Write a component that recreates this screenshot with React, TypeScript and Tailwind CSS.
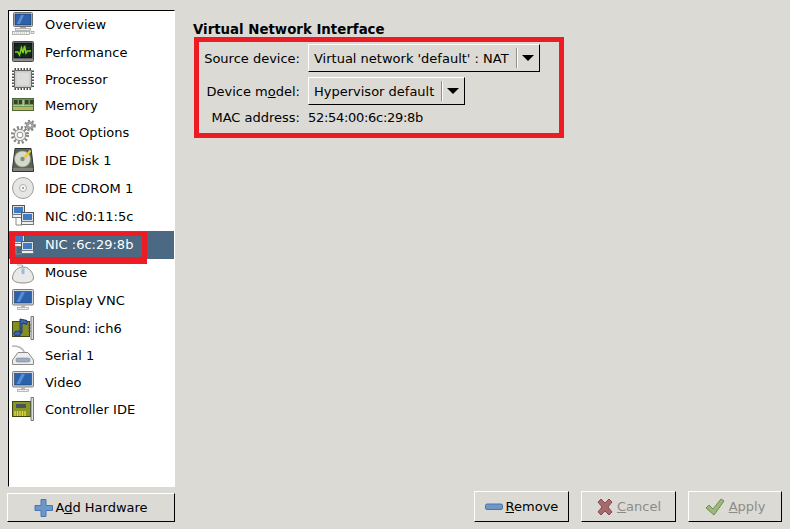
const FONT = "font-['DejaVu_Sans',sans-serif]";

function Monitor() {
  return (
    <svg width="24" height="24" viewBox="0 0 24 24">
      <rect x="1.500" y="1.500" width="21" height="15.500" rx="1" fill="#d5d9dc" stroke="#7d7f80" />
      <rect x="3.500" y="3.500" width="17" height="11.500" fill="#2b62ad" stroke="#23406b" strokeWidth="0.600" />
      <path d="M9 14l5-10h-3.500l-5 10z" fill="#5e8bce" />
      <rect x="10" y="17" width="4" height="2.500" fill="#b4b6b4" />
      <rect x="6.500" y="19.500" width="11" height="2" fill="#ecece9" stroke="#a3a3a0" strokeWidth="0.700" />
    </svg>
  );
}

function Overview() {
  return (
    <svg width="24" height="24" viewBox="0 0 24 24">
      <rect x="2.500" y="0.500" width="19" height="14" rx="1" fill="#d5d9dc" stroke="#6c6e70" />
      <rect x="4" y="2" width="16" height="11" fill="#2b62ad" stroke="#1f3454" strokeWidth="0.700" />
      <path d="M9 12l4-9h-3l-4 9z" fill="#5e8bce" />
      <rect x="9" y="15" width="6" height="1.500" fill="#aaa" />
      <rect x="4.500" y="16.500" width="15" height="2" fill="#ecece9" stroke="#999" strokeWidth="0.700" />
      <rect x="1.500" y="19.500" width="17" height="3" fill="#f2f2f0" stroke="#999" strokeWidth="0.700" />
      <path d="M3 21h14" stroke="#bbb" strokeDasharray="1 1" />
      <rect x="20" y="19.500" width="3" height="2" fill="#eee" stroke="#999" strokeWidth="0.700" />
    </svg>
  );
}

function Performance() {
  return (
    <svg width="24" height="24" viewBox="0 0 24 24">
      <rect x="1.500" y="1.500" width="21" height="20" rx="1" fill="#8a8c8d" stroke="#4a4a4a" />
      <rect x="3" y="3" width="18" height="15" fill="#13241a" stroke="#000" strokeWidth="0.600" />
      <path d="M4 8h16M4 13h16M9 4v13M15 4v13" stroke="#3d5a3a" strokeWidth="0.400" />
      <path d="M4 12h3l1.500 3 2-7 1.500 5 1.500-7 1.500 7 1.500-2h3.500" fill="none" stroke="#7ed321" strokeWidth="1.500" />
    </svg>
  );
}

function Processor() {
  const pins = [2, 5, 8, 11, 14, 17];
  return (
    <svg width="24" height="24" viewBox="0 0 24 24">
      {pins.map((p) => (
        <g key={p} fill="#4f4f4f">
          <rect x={p + 1.500} y="1" width="1.500" height="3" />
          <rect x={p + 1.500} y="20" width="1.500" height="3" />
          <rect x="1" y={p + 1.500} width="3" height="1.500" />
          <rect x="20" y={p + 1.500} width="3" height="1.500" />
        </g>
      ))}
      <rect x="3.500" y="3.500" width="17" height="17" rx="1" fill="#c9c9c7" stroke="#6b6b6b" />
      <rect x="5.500" y="5.500" width="13" height="13" fill="#dcdcda" />
    </svg>
  );
}

function Memory() {
  const chips = [3, 8, 14, 19];
  return (
    <svg width="24" height="24" viewBox="0 0 24 24">
      <rect x="1.500" y="5.500" width="21" height="12" fill="#6f9457" stroke="#4d6a3c" />
      {chips.map((x) => (
        <rect key={x} x={x} y="7" width="3.500" height="4" fill="#36402f" />
      ))}
      <path d="M2 12.500h20" stroke="#a7c48c" />
      <path d="M12 7v6" stroke="#d3e6bd" />
      <rect x="2" y="14" width="20" height="3" fill="#dcc95f" />
      <path d="M3 14v3M5 14v3M7 14v3M9 14v3M11 14v3M13 14v3M15 14v3M17 14v3M19 14v3M21 14v3" stroke="#6f7a30" strokeWidth="0.500" />
    </svg>
  );
}

function Gear({ cx, cy, r, fill }: { cx: number; cy: number; r: number; fill: string }) {
  return (
    <g>
      <circle cx={cx} cy={cy} r={r} fill="none" stroke="#858583" strokeWidth={r * 0.42} strokeDasharray="2 2" />
      <circle cx={cx} cy={cy} r={r * 0.76} fill={fill} stroke="#7a7a78" strokeWidth="0.800" />
      <circle cx={cx} cy={cy} r={r * 0.38} fill="#fff" stroke="#7a7a78" strokeWidth="0.800" />
    </g>
  );
}

function Boot() {
  return (
    <svg width="25" height="26" viewBox="0 0 25 26">
      <Gear cx={19} cy={6.500} r={4.800} fill="#b5b5b3" />
      <Gear cx={9} cy={16} r={7.500} fill="#efefed" />
    </svg>
  );
}

function Disk() {
  return (
    <svg width="24" height="26" viewBox="0 0 24 26">
      <path d="M4 1.500h16l2.500 20v3h-21v-3z" fill="#5a6652" stroke="#333" />
      <rect x="2" y="21" width="20" height="3" fill="#7f817c" />
      <circle cx="11.500" cy="12" r="8" fill="#d5dac8" stroke="#8d947f" strokeWidth="0.600" />
      <circle cx="11.500" cy="12" r="2.200" fill="#888" />
      <path d="M19.500 3.500l-6 7.500" stroke="#ecc82c" strokeWidth="2.200" />
    </svg>
  );
}

function Cdrom() {
  return (
    <svg width="24" height="24" viewBox="0 0 24 24">
      <circle cx="12" cy="12" r="10.500" fill="#e6e6e4" stroke="#9e9e9c" />
      <circle cx="12" cy="12" r="3.500" fill="#f7f7f6" stroke="#b0b0ae" />
      <circle cx="12" cy="12" r="1" fill="#888" />
    </svg>
  );
}

function Nic() {
  return (
    <svg width="24" height="24" viewBox="0 0 24 24">
      <path d="M5 14v7h6" fill="none" stroke="#8a8a8a" />
      <rect x="1.500" y="1.500" width="12" height="9" fill="#dde1e5" stroke="#555" />
      <rect x="3" y="3" width="9" height="6" fill="#3f7ac4" />
      <rect x="1.500" y="10.500" width="12" height="3" fill="#efefed" stroke="#777" />
      <rect x="10.500" y="8.500" width="12" height="9" fill="#dde1e5" stroke="#555" />
      <rect x="12" y="10" width="9" height="6" fill="#3f7ac4" />
      <rect x="10.500" y="17.500" width="12" height="3" fill="#efefed" stroke="#777" />
    </svg>
  );
}

function Mouse() {
  return (
    <svg width="24" height="24" viewBox="0 0 24 24">
      <path d="M11.500 7V4H6" fill="none" stroke="#a5a5a5" />
      <path d="M12 6c7 0 10.500 7 10.500 11 0 3-4 5-10.500 5S1.500 20 1.500 17C1.500 13 5 6 12 6z" fill="#e9e9e7" stroke="#8c8c8a" />
      <path d="M10.500 7.500h3v5l-1.500 1-1.500-1z" fill="#9dbbdd" />
    </svg>
  );
}

function Sound() {
  return (
    <svg width="24" height="26" viewBox="0 0 24 26">
      <rect x="1.500" y="6.500" width="17" height="15" fill="#838f22" stroke="#3d4510" />
      <path d="M20 1.500h2.500v23H20z" fill="#dedede" stroke="#777" />
      <path d="M17 10h3M17 13h3M17 16h3" stroke="#555" />
      <path d="M9 18V4l7 1.500v4L11 8v10z" fill="#3d64a8" stroke="#203a70" />
      <ellipse cx="6.500" cy="18.500" rx="3.500" ry="2.500" fill="#3d64a8" stroke="#203a70" />
    </svg>
  );
}

function Serial() {
  return (
    <svg width="24" height="24" viewBox="0 0 24 24">
      <path d="M14 10C11 4 7 3 1 3" fill="none" stroke="#b5b5b5" strokeWidth="1.600" />
      <path d="M7 9.500h10l5.500 7.500v4.500h-21V17z" fill="#ededeb" stroke="#8a8a8a" />
      <rect x="5" y="15" width="14" height="4" rx="1.500" fill="#9eabc1" stroke="#6d7a90" strokeWidth="0.500" />
    </svg>
  );
}

function Controller() {
  return (
    <svg width="24" height="26" viewBox="0 0 24 26">
      <rect x="1.500" y="5.500" width="18" height="15" fill="#8a9622" stroke="#3d4510" />
      <rect x="5" y="8" width="10" height="4" fill="#47525a" />
      <path d="M4 15v5M6.500 15v5M9 15v5M11.500 15v5M14 15v5" stroke="#ebd94c" strokeWidth="1.300" />
      <path d="M20 1.500h2.500v23H20z" fill="#dedede" stroke="#777" />
    </svg>
  );
}

const DEVICES = [
  { label: "Overview", icon: <Overview />, h: "h-[28px]" },
  { label: "Performance", icon: <Performance />, h: "h-[28px]" },
  { label: "Processor", icon: <Processor />, h: "h-[26px]" },
  { label: "Memory", icon: <Memory />, h: "h-[26px]" },
  { label: "Boot Options", icon: <Boot />, h: "h-[28px]" },
  { label: "IDE Disk 1", icon: <Disk />, h: "h-[28px]" },
  { label: "IDE CDROM 1", icon: <Cdrom />, h: "h-[28px]" },
  { label: "NIC :d0:11:5c", icon: <Nic />, h: "h-[29px] pb-px" },
  { label: "NIC :6c:29:8b", icon: <Nic />, h: "h-[28px] pb-px", selected: true },
  { label: "Mouse", icon: <Mouse />, h: "h-[27px]" },
  { label: "Display VNC", icon: <Monitor />, h: "h-[28px]" },
  { label: "Sound: ich6", icon: <Sound />, h: "h-[28px]" },
  { label: "Serial 1", icon: <Serial />, h: "h-[26px]" },
  { label: "Video", icon: <Monitor />, h: "h-[28px]" },
  { label: "Controller IDE", icon: <Controller />, h: "h-[26px]" },
];

const BEVEL = "border border-t-white border-l-white border-r-black border-b-black bg-[#dcdad5]";

function Combo({ children }: { children: React.ReactNode }) {
  return (
    <div className={`flex h-[28px] items-center pl-[5px] pr-[5px] ${BEVEL}`}>
      <span>{children}</span>
      <span className="ml-[7px] h-[20px] w-[2px] border-l border-[#8f8d89] bg-white" />
      <span className="ml-[4px] h-0 w-0 border-x-[6px] border-t-[6px] border-x-transparent border-t-black" />
    </div>
  );
}

export default function App() {
  return (
    <div className={`flex h-[529px] w-[790px] overflow-hidden bg-[#dcdad5] text-[13px] leading-none text-black ${FONT}`}>
      {/* Device list */}
      <div className="flex w-[176px] shrink-0 flex-col pb-[7px] pl-[7px] pt-[10px]">
        <div className="relative ml-px mr-px h-[477px] border border-b-white border-l-black border-r-white border-t-black bg-white">
          <ul className="-mt-px">
            {DEVICES.map((d) => (
              <li
                key={d.label}
                className={`flex items-center ${d.h} ${d.selected ? "bg-[#4b6983] text-white" : ""}`}
              >
                <span className="flex w-[36px] shrink-0 pl-[2px]">{d.icon}</span>
                <span>{d.label}</span>
              </li>
            ))}
          </ul>
          {/* annotation round the selected row */}
          <div className="absolute left-px top-[221px] h-[32px] w-[137px] border-x-[5px] border-b-[7px] border-t-[4px] border-[#ed1c24]" />
        </div>
        <button className={`mt-[6px] flex h-[29px] w-[168px] items-center justify-center ${BEVEL}`}>
          <svg width="20" height="20" viewBox="0 0 20 20">
            <path d="M7 1.500h5v6h6.500v5H12v6H7v-6H1v-5h6z" fill="#6d97c9" stroke="#4a76ad" />
          </svg>
          <span className="ml-px">
            A<span className="underline">d</span>d Hardware
          </span>
        </button>
      </div>

      {/* Detail page */}
      <div className="flex flex-1 flex-col pb-[7px] pl-[17px] pr-[8px] pt-[23px]">
        <h2 className="text-[13.33px] font-bold leading-[14px]">Virtual Network Interface</h2>
        <div className="mt-[7px] grid w-fit grid-cols-[107px_auto] items-center justify-start gap-x-[8px] gap-y-[5px]">
          <span className="text-right">Source device:</span>
          <div className="justify-self-start"><Combo>Virtual network 'default' : NAT</Combo></div>
          <span className="text-right">
            Device m<span className="underline">o</span>del:
          </span>
          <div className="justify-self-start"><Combo>Hypervisor default</Combo></div>
          <span className="mt-[1px] text-right">MAC address:</span>
          <span className="mt-[1px] tracking-[-0.3px]">52:54:00:6c:29:8b</span>
        </div>
        <div className="mt-auto flex justify-end gap-[12px]">
          <button className={`flex h-[31px] w-[95px] items-center justify-center ${BEVEL}`}>
            <svg width="18" height="8" viewBox="0 0 18 8">
              <rect x="0.500" y="1" width="17" height="5.500" rx="1.500" fill="#6d97c9" stroke="#4a76ad" />
            </svg>
            <span className="ml-[3px]"><span className="underline">R</span>emove</span>
          </button>
          <button className={`flex h-[31px] w-[95px] items-center justify-center text-[#8d8b87] ${BEVEL}`}>
            <svg width="18" height="20" viewBox="0 0 18 20">
              <path d="M2 5l3-3 4 4 4-4 3 3-4 5 4 5-3 3-4-4-4 4-3-3 4-5z" fill="#a8696c" stroke="#8a4a4e" />
            </svg>
            <span className="ml-[3px]"><span className="underline">C</span>ancel</span>
          </button>
          <button className={`flex h-[31px] w-[94px] items-center justify-center text-[#8d8b87] ${BEVEL}`}>
            <svg width="21" height="20" viewBox="0 0 21 20">
              <path d="M1 11l3-3 4 4 8-10 3 2-10 14z" fill="#9db87c" stroke="#6f8f52" />
            </svg>
            <span className="ml-[3px]"><span className="underline">A</span>pply</span>
          </button>
        </div>
      </div>

      {/* annotation round the network form */}
      <div className="pointer-events-none absolute left-[194px] top-[37px] h-[101px] w-[370px] border-[5px] border-[#ed1c24]" />
    </div>
  );
}
